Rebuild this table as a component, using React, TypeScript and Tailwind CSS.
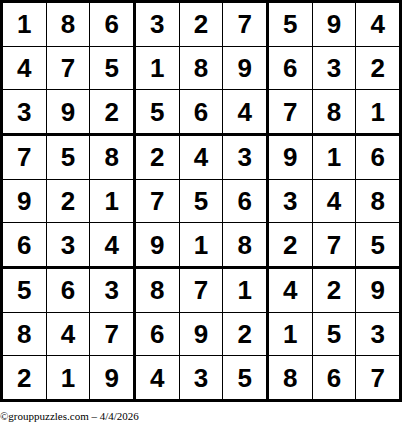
import React from "react";

const rows = [
  "186327594",
  "475189632",
  "392564781",
  "758243916",
  "921756348",
  "634918275",
  "563871429",
  "847692153",
  "219435867",
];

export default function App() {
  const boxes = [0, 1, 2, 3, 4, 5, 6, 7, 8];
  return (
    <div className="w-[402px] h-[424px] bg-white">
      <div className="w-[402px] h-[402px] bg-black p-[3px]">
        <div className="grid grid-cols-3 grid-rows-3 gap-[3px] w-full h-full">
          {boxes.map((b) => {
            const br = Math.floor(b / 3);
            const bc = b % 3;
            return (
              <div key={b} className="grid grid-cols-3 grid-rows-3 gap-[1px] bg-black">
                {boxes.map((c) => {
                  const r = br * 3 + Math.floor(c / 3);
                  const col = bc * 3 + (c % 3);
                  return (
                    <div
                      key={c}
                      className="bg-white flex items-center justify-center text-[26px] font-bold text-black leading-none"
                      style={{ fontFamily: '"Liberation Sans", Arial, sans-serif' }}
                    >
                      {rows[r][col]}
                    </div>
                  );
                })}
              </div>
            );
          })}
        </div>
      </div>
      <div
        className="mt-[8px] text-[11px] leading-[13px] text-black"
        style={{ fontFamily: '"Liberation Serif", "Times New Roman", serif' }}
      >
        ©grouppuzzles.com – 4/4/2026
      </div>
    </div>
  );
}
